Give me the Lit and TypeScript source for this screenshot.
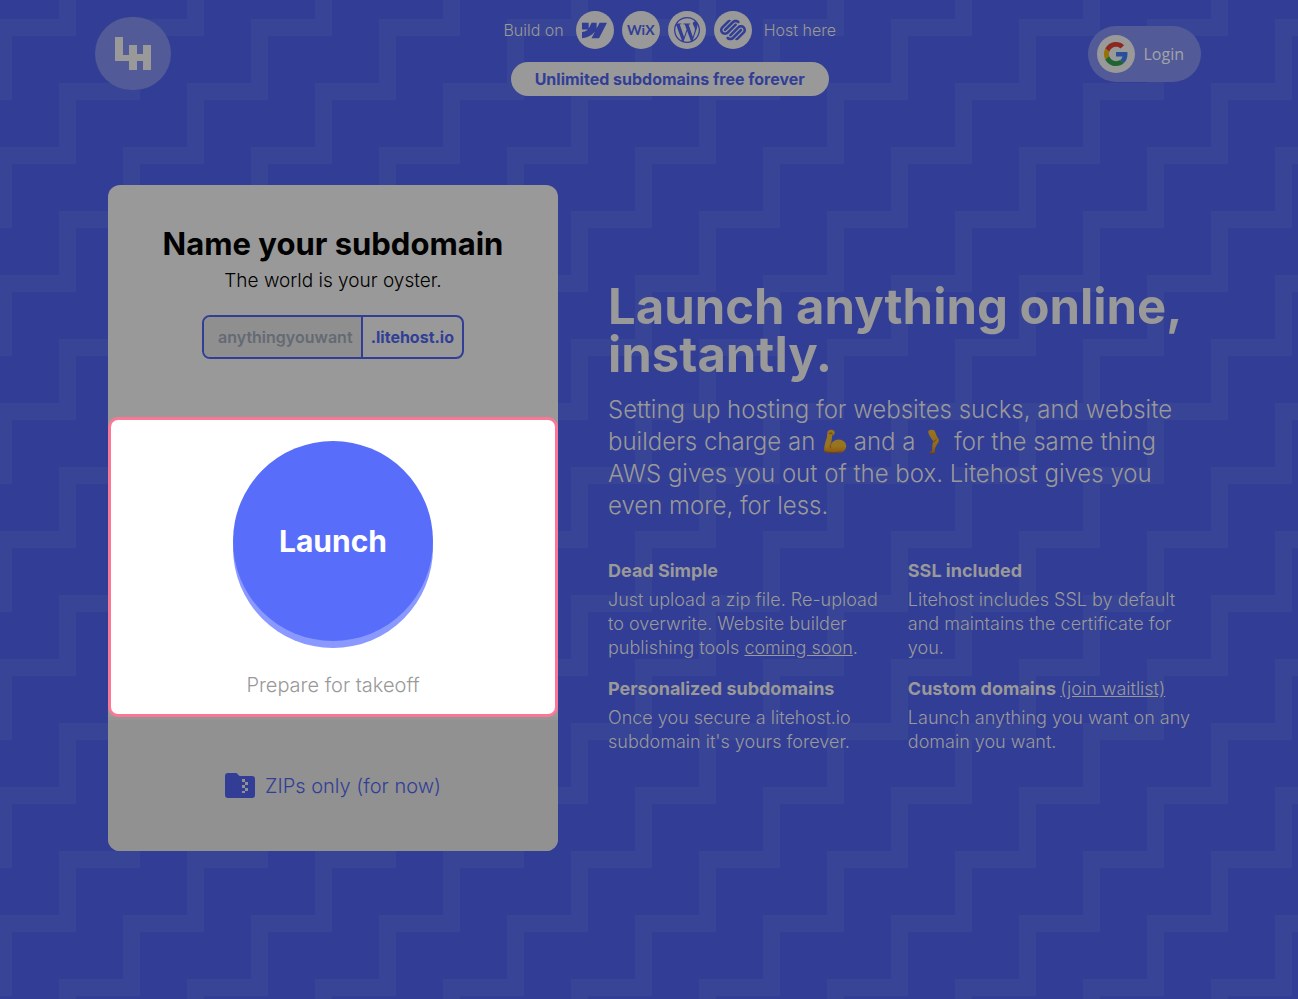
import { LitElement, html, css, svg } from "lit";
import { customElement, state } from "lit/decorators.js";

const builders = [
  {
    name: "Webflow",
    size: 25,
    path: "m24 4.515-7.658 14.97H9.149l3.205-6.204h-.144C9.566 16.713 5.621 18.973 0 19.485v-6.118s3.596-.213 5.71-2.435H0V4.515h6.417v5.278l.144-.001 2.622-5.277h4.854v5.244h.144l2.72-5.244H24Z",
  },
  { name: "WiX", size: 0, path: "" },
  {
    name: "WordPress",
    size: 26,
    path: "M21.469 6.825c.84 1.537 1.318 3.3 1.318 5.175 0 3.979-2.156 7.456-5.363 9.325l3.295-9.527c.615-1.54.82-2.771.82-3.864 0-.405-.026-.78-.07-1.11m-7.981.105c.647-.03 1.232-.105 1.232-.105.582-.075.514-.93-.067-.899 0 0-1.755.135-2.88.135-1.064 0-2.85-.15-2.85-.15-.585-.03-.661.855-.075.885 0 0 .54.061 1.125.09l1.68 4.605-2.37 7.08L5.354 6.9c.649-.03 1.234-.1 1.234-.1.585-.075.516-.93-.065-.896 0 0-1.746.138-2.874.138-.2 0-.438-.008-.69-.015C4.911 3.15 8.235 1.215 12 1.215c2.809 0 5.365 1.072 7.286 2.833-.046-.003-.091-.009-.141-.009-1.06 0-1.812.923-1.812 1.914 0 .89.513 1.643 1.06 2.531.411.72.89 1.643.89 2.977 0 .915-.354 1.994-.821 3.479l-1.075 3.585-3.9-11.61.001.014zM12 22.784c-1.059 0-2.081-.153-3.048-.437l3.237-9.406 3.315 9.087c.024.053.05.101.078.149-1.12.393-2.325.609-3.582.609M1.211 12c0-1.564.336-3.05.935-4.39L7.29 21.709C3.694 19.96 1.212 16.271 1.211 12M12 0C5.385 0 0 5.385 0 12s5.385 12 12 12 12-5.385 12-12S18.615 0 12 0",
  },
  {
    name: "Squarespace",
    size: 26,
    path: "M22.655 8.719c-1.802-1.801-4.726-1.801-6.564 0l-7.351 7.35c-.45.45-.45 1.2 0 1.65.45.449 1.2.449 1.65 0l7.351-7.351c.899-.899 2.362-.899 3.264 0 .9.9.9 2.364 0 3.264l-7.239 7.239c.9.899 2.362.899 3.263 0l5.589-5.589c1.836-1.838 1.836-4.763.037-6.563zm-2.475 2.437c-.451-.45-1.201-.45-1.65 0l-7.354 7.389c-.9.899-2.361.899-3.262 0-.45-.45-1.2-.45-1.65 0s-.45 1.2 0 1.649c1.801 1.801 4.726 1.801 6.564 0l7.351-7.35c.449-.487.449-1.239.001-1.688zm-2.439-7.35c-1.801-1.801-4.726-1.801-6.564 0l-7.351 7.351c-.45.449-.45 1.199 0 1.649s1.2.45 1.65 0l7.395-7.351c.9-.899 2.371-.899 3.27 0 .451.45 1.201.45 1.65 0 .421-.487.421-1.199-.05-1.649zm-2.475 2.475c-.45-.45-1.2-.45-1.65 0l-7.351 7.351c-.899.9-2.363.9-3.265 0-.9-.9-.9-2.364 0-3.264l7.239-7.239c-.9-.9-2.362-.9-3.263 0L1.35 8.719c-1.8 1.8-1.8 4.725 0 6.563 1.801 1.801 4.725 1.801 6.564 0l7.35-7.351c.451-.488.451-1.2.002-1.65z",
  },
];

const armIcon = svg`
  <linearGradient id="arm" x1="0" y1="0" x2="0" y2="1">
    <stop offset="0" stop-color="#97741f" /><stop offset="0.7" stop-color="#97741f" /><stop offset="1" stop-color="#8a530f" />
  </linearGradient>
  <path d="M2.2 22.300C1.800 17.500 3.600 12.500 4.900 8.300 5.200 6 5.100 4.200 5.700 2.600 6.600 1 8.800.5 10.600 1c1.600.4 2.400 1.500 2.100 2.900-.3 1.400-1.300 2.300-2.500 2.600-.3 3-.6 6.200-1.600 9.300 1.700-3 4.300-5.200 7.900-5.200 4.700 0 7.800 3.100 7.700 6.600-.1 4.700-4.400 6.800-10.200 6.900C9.300 24.200 4.800 24 2.200 22.300Z" fill="url(#arm)" />
  <path d="M8.600 15.800c-.5 1.200-.5 2.200 0 3.100M7.300 4.500l2.100-.7.800 1.500M2.800 22.500c4.500 1.500 11 1.600 16 .3" fill="none" stroke="#6f3f0a" stroke-width="0.9" stroke-linecap="round" />`;

const legIcon = svg`
  <linearGradient id="leg" x1="0" y1="0" x2="0" y2="1">
    <stop offset="0" stop-color="#97741f" /><stop offset="0.7" stop-color="#906a18" /><stop offset="1" stop-color="#83500f" />
  </linearGradient>
  <path d="M6.200 2.200C7.300.8 10.100.3 12.200 1.300c1.800 2.800 2 5.600 4 8.300 1 1.300.9 2.700.1 4-1.700 2.500-3.400 4.800-3.600 8.100.1.900.5 1.600.3 2.100-.6.500-5 .5-5.400.1-.2-.9 1.900-1.500 2.600-2.500.1-3.100-.3-5.800 1.200-9C9.500 9.300 6.500 6.500 6.200 2.200Z" fill="url(#leg)" />
  <path d="M11.600 12.600c1.100-.3 2-.9 2.400-1.900M7.700 23.900h4.800" fill="none" stroke="#6f3f0a" stroke-width="0.9" stroke-linecap="round" />`;

@customElement("app-root")
export class AppRoot extends LitElement {
  static styles = css`
    :host {
      --blue: #323e96;
      --stair: #384495;
      --paper: #999999;
      display: block;
      position: relative;
      min-height: 100vh;
      background: var(--blue);
      color: var(--paper);
      font-family: Inter, sans-serif;
      font-weight: 300;
    }
    * { box-sizing: border-box; }
    h1, h2, h3, p { margin: 0; }
    a { color: inherit; }
    .backdrop {
      position: absolute;
      inset: 0;
      width: 100%;
      height: 100%;
    }
    .stair { fill: var(--stair); }
    .page {
      position: relative;
      max-width: 1298px;
      margin: 0 auto;
    }
    header {
      display: flex;
      justify-content: space-between;
      align-items: center;
      padding: 11px 97px 0 95px;
    }
    .logo {
      display: grid;
      place-items: center;
      width: 76px;
      height: 73px;
      border-radius: 38px;
      background: #525b98;
    }
    .logo svg, .chip svg, .zip svg { display: block; }
    .promo {
      display: grid;
      justify-items: center;
      gap: 13px;
      padding-left: 80px;
    }
    .hosts {
      display: flex;
      align-items: center;
      gap: 12px;
      font-size: 16px;
    }
    .chips {
      display: flex;
      gap: 8px;
    }
    .chip {
      display: grid;
      place-items: center;
      width: 38px;
      height: 38px;
      border-radius: 50%;
      background: var(--paper);
      color: var(--blue);
    }
    .wix {
      font: 700 14px/20px Lato, sans-serif;
    }
    .pill {
      padding: 0 24px;
      border-radius: 17px;
      background: var(--paper);
      color: var(--blue);
      font-size: 16px;
      font-weight: 700;
      line-height: 34px;
    }
    .login {
      display: flex;
      align-items: center;
      gap: 8px;
      height: 56px;
      padding: 0 17px 0 9px;
      border: 0;
      border-radius: 28px;
      background: #525b98;
      color: #a3a4a8;
      font: 400 16px/24px "Open Sans", sans-serif;
    }
    main {
      display: grid;
      grid-template-columns: 450px 1fr;
      align-items: center;
      gap: 50px;
      padding: 89px 108px;
    }
    .card {
      border-radius: 12px;
      background: var(--paper);
      overflow: hidden;
      text-align: center;
    }
    .naming {
      display: grid;
      justify-items: center;
      padding: 40px 20px 58px;
      color: #000000;
    }
    .naming h2 {
      font-size: 31px;
      line-height: 38px;
      font-weight: 700;
    }
    .lead {
      font-size: 19px;
      line-height: 36px;
    }
    .field {
      display: flex;
      align-items: center;
      width: 262px;
      height: 44px;
      margin-top: 16px;
      border: 2px solid var(--blue);
      border-radius: 8px;
      overflow: hidden;
      color: var(--blue);
      font-size: 16px;
      font-weight: 700;
    }
    .field input {
      flex: 1;
      min-width: 0;
      height: 100%;
      padding: 0 0 0 14px;
      border: 0;
      border-right: 2px solid var(--blue);
      outline: 0;
      background: #8f8f8f;
      color: #000000;
      font: 600 16px/24px Inter, sans-serif;
    }
    .field input::placeholder { color: #646a74; opacity: 1; }
    .suffix { padding: 0 8px; }
    .launch {
      display: grid;
      justify-items: center;
      align-content: start;
      gap: 30px;
      height: 300px;
      padding-top: 21px;
      border: 3px solid #fa7896;
      border-radius: 10px;
      background: #ffffff;
    }
    .launch button {
      width: 200px;
      height: 200px;
      border: 0;
      border-radius: 50%;
      background: #586efb;
      box-shadow: 0 7px 0 #8a99ff;
      color: #ffffff;
      font: 700 30px/40px Inter, sans-serif;
    }
    .launch p {
      color: #999999;
      font-size: 20px;
      line-height: 28px;
    }
    .zip {
      display: flex;
      align-items: center;
      justify-content: center;
      gap: 10px;
      height: 134px;
      border-top: 3px solid #959595;
      background: #919191;
      color: var(--blue);
      font-size: 20px;
    }
    h1 {
      font-size: 49px;
      line-height: 48px;
      font-weight: 700;
    }
    .intro {
      margin-top: 15px;
      font-size: 24px;
      line-height: 32px;
    }
    .intro svg { vertical-align: -4px; }
    .features {
      display: grid;
      grid-template-columns: 1fr 1fr;
      gap: 17px 18px;
      margin-top: 37px;
      font-size: 18px;
      line-height: 24px;
      white-space: nowrap;
    }
    h3 {
      margin-bottom: 5px;
      font-size: 18px;
      line-height: 24px;
      font-weight: 700;
    }
    h3 a { font-weight: 300; }
  `;

  @state() private subdomain = "";

  private onInput(e: Event) {
    this.subdomain = (e.target as HTMLInputElement).value;
  }

  render() {
    return html`
      <svg class="backdrop" aria-hidden="true">
        <defs>
          <pattern id="stairs" x="59" y="19" width="128" height="128" patternUnits="userSpaceOnUse">
            <path class="stair" d="M64 0H128V17H81V81H17V128H0V64H64ZM0 0H17V17H0Z" />
          </pattern>
        </defs>
        <rect width="100%" height="100%" fill="url(#stairs)" />
      </svg>
      <div class="page">
        <header>
          <div class="logo" role="img" aria-label="Litehost">
            <svg width="36" height="33" viewBox="0 0 36 33" fill="#999999">
              <path d="M0 0H8V18H14V8H22V17H28V8H36V33H28V24H22V33H14V24H0Z" />
            </svg>
          </div>
          <div class="promo">
            <div class="hosts">
              <span>Build on</span>
              <div class="chips">
                ${builders.map((b) => html`
                  <span class="chip">
                    ${b.path
                      ? html`<svg width=${b.size} height=${b.size} viewBox="0 0 24 24" fill="currentColor" role="img" aria-label=${b.name}><path d=${b.path} /></svg>`
                      : html`<span class="wix">${b.name}</span>`}
                  </span>`)}
              </div>
              <span>Host here</span>
            </div>
            <div class="pill">Unlimited subdomains free forever</div>
          </div>
          <button class="login">
            <span class="chip">
              <svg width="24" height="24" viewBox="0 0 48 48" aria-hidden="true">
                <path fill="#8c2820" d="M24 9.500c3.540 0 6.710 1.220 9.210 3.600l6.850-6.850C35.900 2.380 30.470 0 24 0 14.620 0 6.510 5.380 2.560 13.220l7.980 6.190C12.430 13.720 17.740 9.500 24 9.500z" />
                <path fill="#28509a" d="M46.980 24.550c0-1.570-.15-3.090-.38-4.550H24v9.020h12.940c-.58 2.960-2.260 5.480-4.780 7.180l7.730 6c4.510-4.180 7.090-10.360 7.090-17.650z" />
                <path fill="#977103" d="M10.530 28.590c-.48-1.450-.76-2.990-.76-4.590s.27-3.140.76-4.590l-7.980-6.190C.92 16.460 0 20.120 0 24c0 3.880.92 7.540 2.560 10.780l7.970-6.190z" />
                <path fill="#1f6532" d="M24 48c6.480 0 11.930-2.130 15.890-5.810l-7.730-6c-2.150 1.450-4.920 2.300-8.160 2.300-6.260 0-11.570-4.220-13.470-9.910l-7.980 6.190C6.510 42.620 14.620 48 24 48z" />
              </svg>
            </span>
            Login
          </button>
        </header>
        <main>
          <section class="card">
            <div class="naming">
              <h2>Name your subdomain</h2>
              <p class="lead">The world is your oyster.</p>
              <div class="field">
                <input aria-label="Subdomain" placeholder="anythingyouwant" .value=${this.subdomain} @input=${this.onInput} />
                <span class="suffix">.litehost.io</span>
              </div>
            </div>
            <div class="launch">
              <button>Launch</button>
              <p>Prepare for takeoff</p>
            </div>
            <div class="zip">
              <svg width="30" height="25" viewBox="0 0 30 25" aria-hidden="true">
                <path fill="#323e96" d="M3 0H11.500L14.500 3H27A3 3 0 0 1 30 6V22A3 3 0 0 1 27 25H3A3 3 0 0 1 0 22V3A3 3 0 0 1 3 0Z" />
                <path fill="#919191" d="M17 6h3v3h-3zM20 9h3v3h-3zM17 12h3v3h-3zM20 15h3v3h-3zM17 18h3v2h-3z" />
              </svg>
              <span>ZIPs only (for now)</span>
            </div>
          </section>
          <section>
            <h1>Launch anything online,<br />instantly.</h1>
            <p class="intro">
              Setting up hosting for websites sucks, and website<br />
              builders charge an
              <svg width="25" height="25" viewBox="0 0 25 25" role="img" aria-label="arm">${armIcon}</svg>
              and a
              <svg width="25" height="25" viewBox="0 0 25 25" role="img" aria-label="leg">${legIcon}</svg>
              for the same thing<br />
              AWS gives you out of the box. Litehost gives you<br />
              even more, for less.
            </p>
            <div class="features">
              <article>
                <h3>Dead Simple</h3>
                <p>Just upload a zip file. Re-upload<br />to overwrite. Website builder<br />publishing tools <a href="#soon">coming soon</a>.</p>
              </article>
              <article>
                <h3>SSL included</h3>
                <p>Litehost includes SSL by default<br />and maintains the certificate for<br />you.</p>
              </article>
              <article>
                <h3>Personalized subdomains</h3>
                <p>Once you secure a litehost.io<br />subdomain it's yours forever.</p>
              </article>
              <article>
                <h3>Custom domains <a href="#waitlist">(join waitlist)</a></h3>
                <p>Launch anything you want on any<br />domain you want.</p>
              </article>
            </div>
          </section>
        </main>
      </div>
    `;
  }
}
